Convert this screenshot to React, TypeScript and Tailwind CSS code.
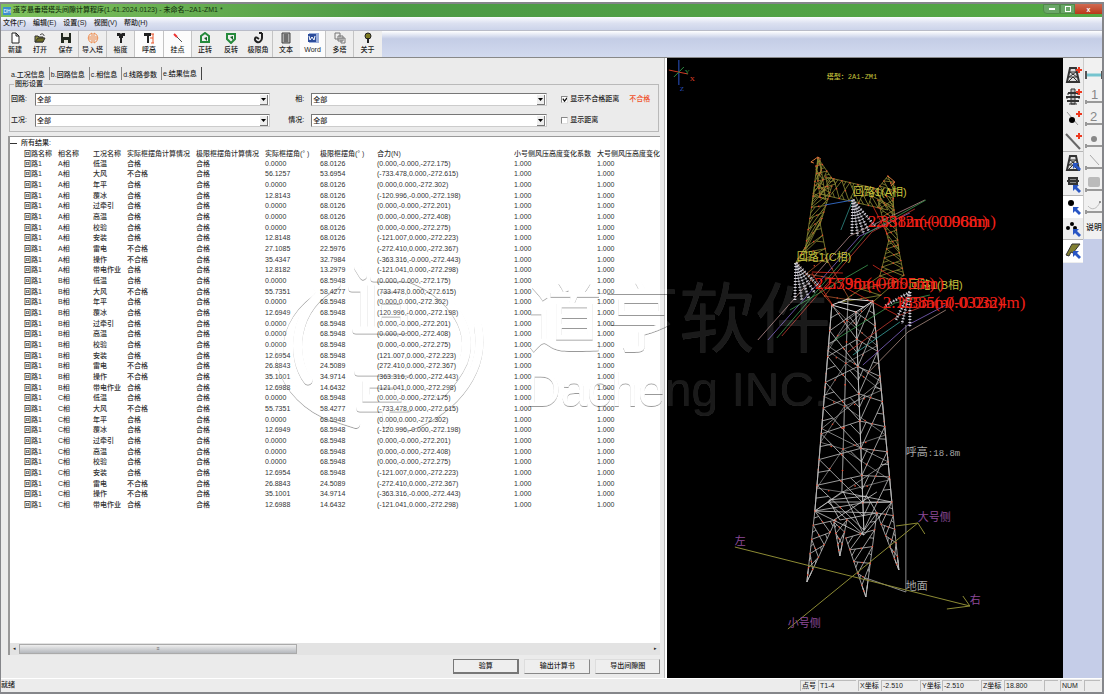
import { Fragment, type ReactNode } from "react";

type Point = [number, number];

const MENUS = ["文件(F)", "编辑(E)", "设置(S)", "视图(V)", "帮助(H)"];

const TABS = ["a.工况信息", "b.回路信息", "c.相信息", "d.线路参数", "e.结果信息"];

const COLUMNS = [
  { label: "回路名称", width: "w-[34px]" },
  { label: "相名称", width: "w-[35px]" },
  { label: "工况名称", width: "w-[34px]" },
  { label: "实际框摆角计算情况", width: "w-[69px]" },
  { label: "极限框摆角计算情况", width: "w-[69px]" },
  { label: "实际框摆角(° )", width: "w-[55px]" },
  { label: "极限框摆角(° )", width: "w-[57px]" },
  { label: "合力(N)", width: "w-[137px]" },
  { label: "小号侧风压高度变化系数", width: "w-[83px]" },
  { label: "大号侧风压高度变化", width: "w-[70px]" },
];

const CASES = ["低温", "大风", "年平", "覆冰", "过牵引", "高温", "校验", "安装", "雷电", "操作", "带电作业"];
const FAILED = ["大风", "雷电", "操作"];

const PHASES = [
  {
    name: "A相",
    actual: ["0.0000", "56.1257", "0.0000", "12.8143", "0.0000", "0.0000", "0.0000", "12.8148", "27.1085", "35.4347", "12.8182"],
    limit: ["68.0126", "53.6954", "68.0126", "68.0126", "68.0126", "68.0126", "68.0126", "68.0126", "22.5976", "32.7984", "13.2979"],
    force: ["(0.000,-0.000,-272.175)", "(-733.478,0.000,-272.615)", "(0.000,0.000,-272.302)", "(-120.996,-0.000,-272.198)", "(0.000,-0.000,-272.201)", "(0.000,-0.000,-272.408)", "(0.000,-0.000,-272.275)", "(-121.007,0.000,-272.223)", "(-272.410,0.000,-272.367)", "(-363.316,-0.000,-272.443)", "(-121.041,0.000,-272.298)"],
  },
  {
    name: "B相",
    actual: ["0.0000", "55.7351", "0.0000", "12.6949", "0.0000", "0.0000", "0.0000", "12.6954", "26.8843", "35.1001", "12.6988"],
    limit: ["68.5948", "58.4277", "68.5948", "68.5948", "68.5948", "68.5948", "68.5948", "68.5948", "24.5089", "34.9714", "14.6432"],
    force: ["(0.000,-0.000,-272.175)", "(733.478,0.000,-272.615)", "(0.000,0.000,-272.302)", "(120.996,-0.000,-272.198)", "(0.000,-0.000,-272.201)", "(0.000,-0.000,-272.408)", "(0.000,-0.000,-272.275)", "(121.007,0.000,-272.223)", "(272.410,0.000,-272.367)", "(363.316,-0.000,-272.443)", "(121.041,0.000,-272.298)"],
  },
  {
    name: "C相",
    actual: ["0.0000", "55.7351", "0.0000", "12.6949", "0.0000", "0.0000", "0.0000", "12.6954", "26.8843", "35.1001", "12.6988"],
    limit: ["68.5948", "58.4277", "68.5948", "68.5948", "68.5948", "68.5948", "68.5948", "68.5948", "24.5089", "34.9714", "14.6432"],
    force: ["(0.000,-0.000,-272.175)", "(-733.478,0.000,-272.615)", "(0.000,0.000,-272.302)", "(-120.996,-0.000,-272.198)", "(0.000,-0.000,-272.201)", "(0.000,-0.000,-272.408)", "(0.000,-0.000,-272.275)", "(-121.007,0.000,-272.223)", "(-272.410,0.000,-272.367)", "(-363.316,-0.000,-272.443)", "(-121.041,0.000,-272.298)"],
  },
];

const ROWS = PHASES.flatMap((phase) =>
  CASES.map((name, i) => [
    "回路1",
    phase.name,
    name,
    FAILED.includes(name) ? "不合格" : "合格",
    "合格",
    phase.actual[i],
    phase.limit[i],
    phase.force[i],
    "1.000",
    "1.000",
  ]),
);

const TOOLS: { label: string; icon: ReactNode; width: string; pressed?: boolean; divider?: boolean }[] = [
  { label: "新建", width: "w-[25px]", icon: <path d="M3 1h4l3 3v7H3zM7 1v3h3" fill="#fff" stroke="#222" /> },
  {
    label: "打开",
    width: "w-[25px]",
    icon: (
      <>
        <path d="M1 4h3l1 1h4v5H1z" fill="#8c8b3c" stroke="#333" />
        <path d="M1 10l3-4h7l-2 4z" fill="#6b6a22" stroke="#333" />
        <path d="M6 3c2-2 4-1 4 1" fill="none" stroke="#333" />
      </>
    ),
  },
  {
    label: "保存",
    width: "w-[26px]",
    divider: true,
    icon: (
      <>
        <path d="M1 1h10v10H1z" fill="#232a20" />
        <path d="M3 1h6v4H3zM4 8h4v3H4z" fill="#e7e7df" />
      </>
    ),
  },
  {
    label: "导入塔",
    width: "w-[28px]",
    divider: true,
    icon: <path d="M5 1C0 3 0 9 5 11V1zM7 1c5 2 5 8 0 10V1zM3 4v4M9 4v4" fill="none" stroke="#ee8a4b" />,
  },
  {
    label: "裕度",
    width: "w-[28px]",
    divider: true,
    icon: <path d="M2 1h3l1 1 1-1h3v3H8v2H7v5H5V6H4V4H2z" fill="#222" />,
  },
  {
    label: "呼高",
    width: "w-[29px]",
    pressed: true,
    divider: true,
    icon: (
      <>
        <path d="M1 1h7v3H6v7H4V4H1z" fill="#222" />
        <path d="M8 2h3M8 11h3M10 2v9M7 6h3" stroke="#e8572c" />
      </>
    ),
  },
  {
    label: "挂点",
    width: "w-[28px]",
    pressed: true,
    divider: true,
    icon: (
      <>
        <path d="M2 2l8 8" stroke="#555" />
        <path d="M2 2l3 3" stroke="#e33" strokeWidth="2" />
      </>
    ),
  },
  {
    label: "正转",
    width: "w-[27px]",
    icon: (
      <>
        <path d="M2 10V4l4-3 4 3v6z" fill="none" stroke="#258a3c" strokeWidth="2" />
        <path d="M5 6l3-1v4z" fill="#165f28" />
      </>
    ),
  },
  {
    label: "反转",
    width: "w-[25px]",
    icon: (
      <>
        <path d="M2 2h8v5l-4 4-4-4z" fill="none" stroke="#258a3c" strokeWidth="2" />
        <path d="M8 4L5 5l3 3z" fill="#165f28" />
      </>
    ),
  },
  {
    label: "极限角",
    width: "w-[29px]",
    divider: true,
    icon: <path d="M10 1v5c0 3-3 5-5 4S2 7 4 5M10 1H7M4 5l3 2" fill="none" stroke="#222" strokeWidth="2" />,
  },
  {
    label: "文本",
    width: "w-[27px]",
    icon: (
      <>
        <path d="M2 1h8v10H2z" fill="#aaa" stroke="#444" />
        <path d="M4 3h4M4 5h4M4 7h4M4 9h4" stroke="#333" />
      </>
    ),
  },
  {
    label: "Word",
    width: "w-[26px]",
    pressed: true,
    divider: true,
    icon: (
      <>
        <path d="M2 1h10v10H2z" fill="#9aaedb" />
        <path d="M1 2h8v8H1z" fill="#2b4c9b" />
        <path d="M2 4l1 4 2-3 2 3 1-4" fill="none" stroke="#fff" />
      </>
    ),
  },
  {
    label: "多塔",
    width: "w-[28px]",
    divider: true,
    icon: <path d="M1 1h5v6H1zM4 4h5v5H4zM7 6h4v5H7z" fill="#eee" stroke="#777" />,
  },
  {
    label: "关于",
    width: "w-[28px]",
    icon: (
      <>
        <circle cx="6" cy="4" r="3" fill="#7d7a21" stroke="#222" />
        <path d="M6 6v5" stroke="#222" strokeWidth="2" />
      </>
    ),
  },
];

const TOWER_ICON = (
  <>
    <path d="M6 2h6l3 14H3z" fill="#ddd" stroke="#333" strokeWidth="2" />
    <path d="M5 6h8M4 11h10M6 6l7 5M12 6l-7 5M5 15l4-4 4 4" fill="none" stroke="#333" />
  </>
);
const POLE_ICON = (
  <>
    <path d="M7 1h4v15H7z" fill="#bbb" stroke="#333" />
    <path d="M4 5h10M2 9h14M3 13h12" stroke="#333" strokeWidth="2" />
    <path d="M4 5v2M14 5v2M3 9v2M15 9v2M5 16h8" stroke="#333" />
  </>
);
const PLUS = <path d="M15 1v6M12 4h6" stroke="#ee3a20" strokeWidth="2" />;
const ARROW = <path d="M9 9h6l-2 2 4 4-2 2-4-4-2 2z" fill="#2956c4" />;

const SIDE_TOOLS: { label: string; icon: ReactNode; divider?: boolean; pressed?: boolean }[] = [
  { label: "新增塔身", icon: <>{TOWER_ICON}{PLUS}</> },
  { label: "新增横担", icon: <>{POLE_ICON}{PLUS}</> },
  { label: "新增节点", icon: <><path d="M3 2l11 13" stroke="#999" /><circle cx="8" cy="10" r="3" />{PLUS}</> },
  { label: "新增杆件", icon: <><path d="M2 2l14 15" stroke="#666" strokeWidth="2" />{PLUS}</>, divider: true },
  { label: "选择塔身", icon: <>{TOWER_ICON}{ARROW}</> },
  { label: "选择横担", icon: <><path d="M3 5h12M5 2h8v6H5z" fill="#888" stroke="#333" strokeWidth="2" />{ARROW}</>, divider: true },
  { label: "选择节点", icon: <><circle cx="7" cy="5" r="3" />{ARROW}</>, pressed: true },
  { label: "选择多点", icon: <><circle cx="8" cy="4" r="2" /><circle cx="4" cy="8" r="2" /><circle cx="11" cy="8" r="2" />{ARROW}</>, divider: true },
  { label: "选择角钢", icon: <><path d="M2 13L8 2h8L9 11l-2-1-2 4z" fill="#817f32" stroke="#333" />{ARROW}</>, pressed: true },
];

const BASE_BAR = <path d="M1 14h16M1 12v4" stroke="#999" strokeWidth="2" />;

const MARK_TOOLS: { label: string; icon: ReactNode }[] = [
  { label: "标尺", icon: <><path d="M1 9h16" stroke="#75c4cf" strokeWidth="3" /><path d="M1 5v8M17 5v8" stroke="#555" strokeWidth="2" /></> },
  { label: "标注一", icon: <><text x="6" y="11" fontSize="13" fill="#888">1</text>{BASE_BAR}</> },
  { label: "标注二", icon: <><text x="5" y="11" fontSize="13" fill="#888">2</text>{BASE_BAR}</> },
  { label: "标注点", icon: <><circle cx="9" cy="7" r="3" fill="#888" />{BASE_BAR}</> },
  { label: "标注线", icon: <><path d="M5 1l9 10" stroke="#aaa" />{BASE_BAR}</> },
  { label: "标注面", icon: <><rect x="3" y="1" width="12" height="10" rx="2" fill="#bbb" />{BASE_BAR}</> },
  { label: "标注弧", icon: <><path d="M3 8c4 5 9 3 12-4" fill="none" stroke="#bbb" /><circle cx="15" cy="4" r="1" fill="#777" />{BASE_BAR}</> },
];

const STATUS_CELLS = [
  { text: "点号", width: "w-[16px]" },
  { text: "T1-4", width: "w-[38px]" },
  { text: "X坐标", width: "w-[21px]" },
  { text: "-2.510", width: "w-[37px]" },
  { text: "Y坐标", width: "w-[20px]" },
  { text: "-2.510", width: "w-[37px]" },
  { text: "Z坐标", width: "w-[21px]" },
  { text: "18.800", width: "w-[38px]" },
  { text: "", width: "w-[14px]" },
  { text: "NUM", width: "w-[22px]" },
  { text: "", width: "w-[16px]" },
];

function lerp(a: Point, b: Point, t: number): Point {
  return [a[0] + (b[0] - a[0]) * t, a[1] + (b[1] - a[1]) * t];
}

function seg(a: Point, b: Point) {
  return `M${a[0].toFixed(1)} ${a[1].toFixed(1)}L${b[0].toFixed(1)} ${b[1].toFixed(1)}`;
}

// One braced face between two chords, with crossed diagonals in every panel.
function Lattice({ a, b, panels, color, cross = true }: { a: [Point, Point]; b: [Point, Point]; panels: number; color: string; cross?: boolean }) {
  let path = seg(...a) + seg(...b);
  const nodes: Point[] = [];
  for (let i = 0; i < panels; i++) {
    const a0 = lerp(a[0], a[1], i / panels);
    const a1 = lerp(a[0], a[1], (i + 1) / panels);
    const b0 = lerp(b[0], b[1], i / panels);
    const b1 = lerp(b[0], b[1], (i + 1) / panels);
    path += i % 2 ? seg(a0, b1) : seg(b0, a1);
    if (cross) {
      path += i % 2 ? seg(b0, a1) : seg(a0, b1);
      path += seg(lerp(a0, a1, 0.5), lerp(a0, b1, 0.25)) + seg(lerp(b0, b1, 0.5), lerp(b0, a1, 0.25));
    }
    nodes.push(a0, b0, lerp(a0, b1, 0.5));
  }
  return (
    <>
      <path d={path} stroke={color} strokeWidth="0.8" fill="none" />
      {nodes.map(([x, y], i) => (
        <circle key={i} cx={x} cy={y} r="0.8" fill="#e0492e" />
      ))}
    </>
  );
}

function Insulator({ apex, ends }: { apex: Point; ends: Point[] }) {
  return (
    <g fill="none">
      {ends.map((end, i) => (
        <Fragment key={i}>
          <path d={seg(apex, end)} stroke="#6f6f7c" strokeWidth="1" />
          <path d={seg(apex, end)} stroke="#d5d2d9" strokeWidth="3" strokeDasharray="1 2" />
        </Fragment>
      ))}
    </g>
  );
}

function Watermark() {
  return (
    <svg className="pointer-events-none absolute inset-0 h-full w-full" viewBox="0 0 1105 695" aria-hidden="true">
      <defs>
        <filter id="emboss" x="-5%" y="-5%" width="110%" height="110%">
          <feOffset in="SourceAlpha" dx="0" dy="1" result="shifted" />
          <feComposite in="shifted" in2="SourceAlpha" operator="out" result="edge" />
          <feColorMatrix in="edge" type="matrix" values="0 0 0 0 0  0 0 0 0 0  0 0 0 0 0  0 0 0 0.4 0" result="shadow" />
          <feColorMatrix in="SourceGraphic" type="matrix" values="1 0 0 0 0  0 1 0 0 0  0 0 1 0 0  0 0 0 0.1 0" result="face" />
          <feMerge>
            <feMergeNode in="shadow" />
            <feMergeNode in="face" />
          </feMerge>
        </filter>
      </defs>
      <g filter="url(#emboss)" fill="#fff">
        <g fill="none" stroke="#fff" strokeLinecap="round">
          <path d="M336 284C291 308 291 358 308 380" strokeWidth="9" />
          <path d="M311 292C262 328 272 388 325 414L356 424" strokeWidth="8" />
          <path d="M398 274C446 286 477 326 463 362Q456 378 440 394" strokeWidth="9" />
          <path d="M478 326C486 368 458 408 410 426" strokeWidth="8" />
          <path d="M358 268l5 8M352 288h12v38M356 330h48M374 278h34M378 288h26v38h-26zM378 300h26M378 313h26" strokeWidth="7" />
          <path d="M358 372h50M366 384h32v14h-32zM360 408h48M386 410v14" strokeWidth="7" />
        </g>
        <text x="527" y="346" className="font-['Noto_Sans_CJK_SC',sans-serif] text-[76px] font-normal">道亨软件</text>
        <text x="526" y="406" className="font-['Liberation_Sans',sans-serif] text-[48px]">Dacheng INC.</text>
      </g>
    </svg>
  );
}

function TowerView() {
  // Corner legs, top of the body to the waist.
  const left: [Point, Point] = [[832, 305], [815, 511]];
  const front: [Point, Point] = [[856, 312], [864, 530]];
  const right: [Point, Point] = [[873, 301], [892, 502]];
  const back: [Point, Point] = [[848, 299], [842, 492]];
  const steel = "#c2c2c2";
  const olive = "#8d8b34";

  return (
    <svg className="h-full w-full bg-black" viewBox="667 58 396 620" preserveAspectRatio="xMidYMid slice" role="img" aria-label="杆塔三维视图">
      <g fill="none">
        <path d="M679 60v25" stroke="#2b55c8" />
        <path d="M669 70l19 4" stroke="#d03a22" />
        <path d="M674 77l10-10" stroke="#2f8d43" />
      </g>
      <g className="font-['Liberation_Serif',serif] text-[7px]">
        <text x="685" y="74" fill="#2f8d43">Y</text>
        <text x="690" y="81" fill="#e04028">X</text>
        <text x="680" y="91" fill="#2b55c8">Z</text>
      </g>
      <text x="827" y="79" fill="#c6c23c" className="font-['Liberation_Mono','Noto_Sans_CJK_SC',monospace] text-[7px]">塔型：2A1-ZM1</text>

      {/* tower head */}
      <Lattice a={[[818, 158], [812, 205]]} b={[[820, 160], [826, 200]]} panels={4} color={olive} />
      <Lattice a={[[815, 185], [805, 252]]} b={[[832, 186], [820, 225]]} panels={6} color={olive} />
      <Lattice a={[[805, 248], [795, 264]]} b={[[820, 222], [828, 262]]} panels={3} color={olive} />
      <Lattice a={[[818, 158], [836, 184]]} b={[[816, 166], [820, 196]]} panels={4} color={olive} />
      <Lattice a={[[826, 177], [882, 190]]} b={[[820, 194], [888, 210]]} panels={7} color={olive} />
      <Lattice a={[[888, 176], [872, 196]]} b={[[894, 182], [893, 215]]} panels={4} color={olive} />
      <Lattice a={[[878, 200], [889, 242]]} b={[[893, 200], [899, 250]]} panels={5} color={olive} />
      <Lattice a={[[889, 240], [880, 276]]} b={[[898, 245], [904, 276]]} panels={4} color={olive} />
      <Lattice a={[[797, 263], [834, 307]]} b={[[826, 258], [850, 300]]} panels={4} color="#a6532b" cross={false} />
      <Lattice a={[[904, 275], [873, 302]]} b={[[880, 276], [842, 302]]} panels={4} color={olive} cross={false} />
      <path d="M814 163l-3-1 7-5 3 2M888 176l7 6-4 4" fill="none" stroke="#d8793b" />

      {/* tower body */}
      <Lattice a={back} b={left} panels={9} color="#858585" cross={false} />
      <Lattice a={back} b={right} panels={9} color="#858585" cross={false} />
      <Lattice a={left} b={right} panels={5} color="#9c9c9c" cross={false} />
      <Lattice a={left} b={front} panels={8} color={steel} />
      <Lattice a={front} b={right} panels={8} color={steel} />
      <path d="M832 305L848 299 873 301 856 312zM838 302l26 5" fill="none" stroke="#ddd" />
      <path d="M815 511L842 492 892 502 864 535zM829 500L867 496 877 513 840 520zM843 491L864 535M828 502L892 502M834 520L877 492M815 511L877 513M828 502L864 535" fill="none" stroke="#ccc" strokeWidth="0.8" />

      {/* feet */}
      <Lattice a={[[815, 511], [807, 582]]} b={[[836, 520], [807, 582]]} panels={5} color={steel} />
      <Lattice a={[[846, 538], [866, 597]]} b={[[877, 513], [866, 597]]} panels={5} color={steel} />
      <Lattice a={[[877, 513], [899, 570]]} b={[[892, 502], [899, 570]]} panels={5} color={steel} />
      <Lattice a={[[834, 522], [840, 556]]} b={[[847, 520], [840, 556]]} panels={3} color={steel} />

      {/* conductors */}
      <g fill="none" strokeWidth="0.8">
        <path d="M758 340L850 236 925 200" stroke="#b48a8a" />
        <path d="M768 340L860 236 910 213" stroke="#8265c6" />
        <path d="M777 338L866 234 926 200" stroke="#3c9a52" />
        <path d="M782 336L872 232 915 209" stroke="#c23a30" />
        <path d="M790 310L868 265" stroke="#3c9a52" />
        <path d="M835 340L895 303 930 295" stroke="#3c9a52" />
        <path d="M848 352L898 316 940 300" stroke="#c23a30" />
        <path d="M853 355L900 322" stroke="#39a3a0" />
        <path d="M863 365L908 325 946 305" stroke="#8265c6" />
        <path d="M867 374L908 332 946 310" stroke="#a98c82" />
        <path d="M825 205L853 200" stroke="#2f63b8" strokeWidth="1" />
        <path d="M853 200L841 230" stroke="#308b86" />
        <path d="M812 272L843 273M812 273L834 307M873 206L888 235M846 288L897 315M873 265L905 285" stroke="#dd2c20" />
      </g>
      <Insulator apex={[853, 200]} ends={[[852, 235], [858, 236], [864, 234], [869, 231], [875, 226]]} />
      <Insulator apex={[796, 263]} ends={[[795, 300], [802, 300], [809, 298], [815, 293], [820, 287]]} />
      <Insulator apex={[910, 292]} ends={[[885, 306], [896, 320], [902, 324], [910, 327]]} />

      <g fill="#c6c23c" className="font-['Liberation_Sans','Noto_Sans_CJK_SC',sans-serif] text-[11px] font-normal">
        <text x="853" y="196">回路1(A相)</text>
        <text x="797" y="261">回路1(C相)</text>
        <text x="909" y="289">回路1(B相)</text>
      </g>
      <g fill="#ee1f17" className="font-['Liberation_Serif',serif] text-[17px]">
        <text x="868" y="227">2.338m(-0.098m)</text>
        <text x="876" y="227">2.512m(-0.068m)</text>
        <text x="815" y="289">2.553m(-0.055m)</text>
        <text x="824" y="289">2.798m(-0.055m)</text>
        <text x="883" y="308">2.185m(-0.032m)</text>
        <text x="897" y="308">2.385m(-0.0324m)</text>
      </g>

      {/* height mark and ground axes */}
      <path d="M906 325v267l-40-14" fill="none" stroke="#8b8b8b" />
      <path d="M735 547l235 59M947 609l23-3-7-10M788 629l130-106M896 526l22-3 7 11" fill="none" stroke="#8d8b34" />
      <g fill="#a7a7a7" className="font-['Noto_Sans_CJK_SC',sans-serif] text-[11px] font-normal">
        <text x="906" y="456">
          呼高<tspan className="font-['Liberation_Mono',monospace] text-[9px]">:18.8m</tspan>
        </text>
        <text x="906" y="590">地面</text>
      </g>
      <g fill="#8c4a98" className="font-['Noto_Sans_CJK_SC',sans-serif] text-[11px] font-normal">
        <text x="735" y="545">左</text>
        <text x="970" y="604">右</text>
        <text x="918" y="521">大号侧</text>
        <text x="788" y="627">小号侧</text>
      </g>
    </svg>
  );
}

function Field({ id, label, width, labelWidth }: { id: string; label: string; width: string; labelWidth: string }) {
  return (
    <div className={`${width} flex items-center`}>
      <label htmlFor={id} className={`${labelWidth} shrink-0`}>
        {label}
      </label>
      <div className="relative flex-1">
        <select id={id} className="block h-[13px] w-full appearance-none border border-[#777] border-r-[#ccc] border-b-[#ccc] bg-white pl-px leading-[11px]">
          <option>全部</option>
        </select>
        <span className="pointer-events-none absolute top-0.5 right-0.5 bottom-px flex w-2 items-center justify-center border-r border-b border-[#777] bg-[#eee]">
          <svg className="h-[3px] w-[5px]" viewBox="0 0 5 3">
            <path d="M0 0h5L2.500 3z" />
          </svg>
        </span>
      </div>
    </div>
  );
}

function Check({ label, checked }: { label: string; checked?: boolean }) {
  return (
    <label className="flex items-center gap-0.5">
      <span className="relative size-[7px] border border-[#888] border-r-[#ddd] border-b-[#ddd] bg-white">
        <input type="checkbox" defaultChecked={checked} className="peer block size-full appearance-none" />
        <svg className="pointer-events-none absolute inset-0 hidden size-full peer-checked:block" viewBox="0 0 6 6">
          <path d="M1 2l2 3 3-4" fill="none" stroke="#111" strokeWidth="1.500" />
        </svg>
      </span>
      {label}
    </label>
  );
}

function ResultPanel() {
  return (
    <section className="flex min-w-0 flex-[661] flex-col border-r border-[#bbb] bg-[#ebebeb] pr-1 pl-[7px]">
      <div className="flex pt-[9px] pl-0.5" role="tablist">
        {TABS.map((tab, i) => (
          <button
            key={tab}
            role="tab"
            aria-selected={i === 4}
            className={`h-[13px] border-r pr-1 pl-px leading-[13px] ${i === 4 ? "border-[#444] pb-px pl-1" : "border-[#888] pt-px"}`}
          >
            {tab}
          </button>
        ))}
      </div>
      <fieldset className="mx-px border border-[#b9b9b9] pb-1">
        <legend className="ml-1 px-px leading-[8px]">图形设置</legend>
        <div className="flex flex-col gap-2 pt-[5px] pl-px">
          <div className="flex items-center">
            <div className="flex flex-1 gap-[25px]">
              <Field id="circuit" label="回路:" width="flex-[259]" labelWidth="w-[24px]" />
              <Field id="phase" label="相:" width="flex-[252]" labelWidth="w-[16px]" />
            </div>
            <div className="flex w-[111px] items-center gap-2.5 pl-[14px]">
              <Check label="显示不合格距离" checked />
              <span className="text-[#f0512b]">不合格</span>
            </div>
          </div>
          <div className="flex items-center">
            <div className="flex flex-1 gap-[18px]">
              <Field id="case" label="工况:" width="flex-[259]" labelWidth="w-[24px]" />
              <Field id="state" label="情况:" width="flex-[259]" labelWidth="w-[23px]" />
            </div>
            <div className="w-[111px] pl-[14px]">
              <Check label="显示距离" />
            </div>
          </div>
        </div>
      </fieldset>

      <div className="mt-1 flex min-h-0 flex-1 flex-col border-t border-l-2 border-[#999] bg-white">
        <div className="min-h-0 flex-1 overflow-hidden">
          <div className="flex h-3 items-center gap-1">
            <span className="h-px w-[7px] bg-[#333]" />
            所有结果:
          </div>
          <table className="ml-3.5 h-[361px] w-[643px] table-fixed text-left leading-[9px] whitespace-nowrap text-[#333]">
            <thead>
              <tr>
                {COLUMNS.map((column) => (
                  <th key={column.label} className={`${column.width} p-0 font-medium`}>
                    {column.label}
                  </th>
                ))}
              </tr>
            </thead>
            <tbody>
              {ROWS.map((row, i) => (
                <tr key={i}>
                  {row.map((cell, j) => (
                    <td key={j} className="p-0">
                      {cell}
                    </td>
                  ))}
                </tr>
              ))}
            </tbody>
          </table>
        </div>
        <div className="flex h-3 items-center bg-[#e3e3e3] px-[3px] text-[5px]">
          <span className="w-1.5">◂</span>
          <div className="flex-1">
            <div className="flex h-2.5 w-[44%] items-center justify-center border border-[#aaa] bg-linear-to-b from-[#eee] to-[#b5b8bd] text-[#666]">≡</div>
          </div>
          <span className="w-1.5 text-right">▸</span>
        </div>
      </div>

      <div className="flex justify-end gap-[5px] py-1">
        <button className="h-[15px] w-[66px] border border-[#777] border-r-2 border-b-2 bg-[#eee]">验算</button>
        <button className="h-[15px] w-[66px] border border-[#ddd] border-r-[#888] border-b-[#888] bg-[#eee]">输出计算书</button>
        <button className="h-[15px] w-[65px] border border-[#ddd] border-r-[#888] border-b-[#888] bg-[#eee]">导出间隙图</button>
      </div>
    </section>
  );
}

export default function App() {
  return (
    <div className="relative h-screen min-h-[600px] overflow-hidden bg-white pt-0.5 pr-px pb-px font-['Liberation_Sans','Noto_Sans_CJK_SC',sans-serif] text-[7px] font-medium text-[#222]">
      <div className="flex h-full flex-col border-2 border-l border-[#85868a] bg-[#ebebeb]">
        <header className="flex h-[13px] shrink-0 items-center bg-linear-to-r from-[#7fc15d] via-[#4c9a45] via-35% to-[#55a845] pl-0.5">
          <span className="mr-0.5 size-2 bg-[#3d8fd0] text-center text-[5px] leading-[8px] text-white">DH</span>
          <h1 className="text-[#16330f]">道亨悬垂塔塔头间隙计算程序(1.41.2024.0123) - 未命名--2A1-ZM1 *</h1>
          <div className="ml-auto flex h-2.5 self-start text-[7px] leading-[9px] text-white">
            <button aria-label="最小化" className="flex w-[17px] items-center justify-center rounded-bl-sm border border-[#4f8a48] bg-[#6aa767]">
              <span className="h-0.5 w-1.5 bg-white" />
            </button>
            <button aria-label="还原" className="flex w-[15px] items-center justify-center border border-[#4f8a48] bg-[#6aa767]">
              <span className="size-1.5 border border-white" />
            </button>
            <button aria-label="关闭" className="w-[27px] bg-linear-to-b from-[#d0694f] to-[#b93818] font-bold">x</button>
          </div>
        </header>

        <nav className="flex h-3.5 shrink-0 items-center gap-[7px] border-b border-[#b9bcc8] bg-linear-to-b from-[#fafbfe] via-[#dbe0f0] to-[#ccd4ea] pl-0.5">
          {MENUS.map((menu) => (
            <button key={menu}>{menu}</button>
          ))}
        </nav>

        <div className="flex h-[27px] shrink-0 border-b border-[#888] bg-linear-to-b from-[#fff] via-[#c4cde6] via-30% to-[#d2daef]">
          <div className="flex bg-[#eeeeee] pl-0.5">
            {TOOLS.map((tool) => (
              <button
                key={tool.label}
                className={`${tool.width} flex flex-col items-center gap-px border-r pt-px ${tool.divider ? "border-[#c4c4c4]" : "border-transparent"} ${tool.pressed ? "bg-[#fcfcfc]" : ""}`}
              >
                <svg className="size-3" viewBox="0 0 12 12">
                  {tool.icon}
                </svg>
                <span className="leading-[10px]">{tool.label}</span>
              </button>
            ))}
          </div>
        </div>

        <main className="flex min-h-0 flex-1">
          <ResultPanel />
          <div className="min-w-0 flex-[401] border-l-2 border-white">
            <TowerView />
          </div>
          <div className="flex items-start bg-[#c5cde8]">
            <div className="flex w-5 flex-col bg-[#eeeeee] pt-1.5 pb-px">
              {SIDE_TOOLS.map((tool) => (
                <button
                  key={tool.label}
                  aria-label={tool.label}
                  className={`flex h-[22px] items-center justify-center border-b ${tool.divider ? "border-[#b5b5b5]" : "border-transparent"} ${tool.pressed ? "bg-white" : ""}`}
                >
                  <svg className="size-[18px]" viewBox="0 0 18 18">
                    {tool.icon}
                  </svg>
                </button>
              ))}
            </div>
            <div className="flex w-[19px] flex-col overflow-hidden border-l border-[#ccc] bg-[#f1f1f1] pt-1.5 pb-px">
              {MARK_TOOLS.map((tool) => (
                <button key={tool.label} aria-label={tool.label} className="flex h-[22px] items-center justify-center pl-0.5">
                  <svg className="size-[18px] shrink-0" viewBox="0 0 18 18">
                    {tool.icon}
                  </svg>
                </button>
              ))}
              <button className="h-5 pl-0.5 text-left text-[8px] whitespace-nowrap">说明</button>
            </div>
          </div>
        </main>

        <footer className="flex h-3.5 shrink-0 items-center justify-between border-t border-white bg-[#ececec]">
          <span>就绪</span>
          <div className="flex gap-0.5 pr-0.5">
            {STATUS_CELLS.map((cell, i) => (
              <span key={i} className={`${cell.width} h-[11px] border-t border-l border-[#bbb] pl-px leading-[10px] whitespace-nowrap`}>
                {cell.text}
              </span>
            ))}
          </div>
        </footer>
      </div>
      <Watermark />
    </div>
  );
}
